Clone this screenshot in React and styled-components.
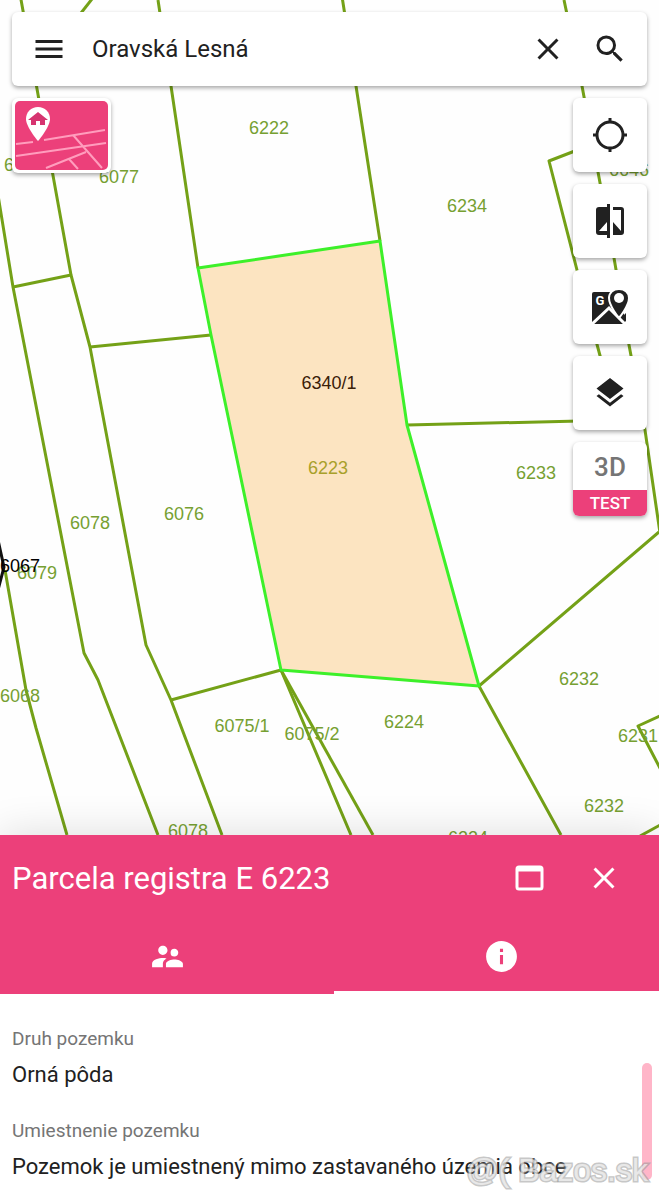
import React, { useState } from 'react'
import styled, { createGlobalStyle } from 'styled-components'
import {
  MdMenu,
  MdClose,
  MdSearch,
  MdLayers,
  MdSupervisorAccount,
  MdInfo,
} from 'react-icons/md'

const GlobalStyle = createGlobalStyle`
  * {
    box-sizing: border-box;
  }

  body {
    margin: 0;
    font-family: Roboto, 'Liberation Sans', sans-serif;
    color: #212121;
    background: #fefefe;
  }

  button {
    font: inherit;
    color: inherit;
    border: 0;
    padding: 0;
    background: none;
    cursor: pointer;
  }
`

const Page = styled.div`
  position: relative;
  display: flex;
  flex-direction: column;
  height: 100vh;
  overflow: hidden;
`

const MapArea = styled.main`
  position: relative;
  flex: 1;
  min-height: 0;
  padding: 12px;
  overflow: hidden;
`

const MapCanvas = styled.svg`
  position: absolute;
  inset: 0;
  width: 100%;
  height: 100%;
  font-family: 'Liberation Sans', Arial, sans-serif;
  font-size: 18px;
  text-anchor: middle;
`

const Boundary = styled.polyline`
  fill: none;
  stroke: ${p => p.$dark ? '#111' : '#74a117'};
  stroke-width: 3;
  stroke-linejoin: round;
`

const Selected = styled.polygon`
  fill: #fce4c1;
  stroke: #3df02a;
  stroke-width: 3;
  stroke-linejoin: round;
`

const ParcelLabel = styled.text`
  fill: ${p => p.$color || '#76a031'};
`

const Overlay = styled.div`
  position: relative;
  display: flex;
  flex-direction: column;
  gap: 12px;
`

const SearchBar = styled.form`
  display: flex;
  align-items: center;
  height: 74px;
  background: #fff;
  border-radius: 6px;
  box-shadow: 0 2px 4px rgba(0, 0, 0, 0.35);
`

const SearchInput = styled.input`
  flex: 1;
  min-width: 0;
  padding: 0 6px;
  border: 0;
  outline: 0;
  font: inherit;
  font-size: 24px;
  color: inherit;
  background: none;
`

const IconButton = styled.button`
  display: flex;
  align-items: center;
  justify-content: center;
  width: ${p => p.$wide ? '74px' : '50px'};
  height: 50px;

  svg {
    width: 36px;
    height: 36px;
  }
`

const Controls = styled.div`
  display: flex;
  justify-content: space-between;
  align-items: flex-start;
`

const LayerThumb = styled.button`
  width: 99px;
  height: 75px;
  padding: 3px;
  background: #fff;
  border-radius: 6px;
  box-shadow: 0 2px 4px rgba(0, 0, 0, 0.35);

  svg {
    display: block;
    width: 93px;
    height: 69px;
    border-radius: 5px;
  }
`

const Tools = styled.div`
  display: flex;
  flex-direction: column;
  gap: 12px;
`

const ToolButton = styled.button`
  display: flex;
  flex-direction: column;
  align-items: center;
  justify-content: center;
  width: 74px;
  height: 74px;
  overflow: hidden;
  background: #fff;
  border-radius: 6px;
  box-shadow: 0 2px 4px rgba(0, 0, 0, 0.35);

  svg {
    width: 36px;
    height: 36px;
  }
`

const ModeName = styled.span`
  padding-top: 2px;
  font-size: 26px;
  font-weight: 500;
  line-height: 46px;
  color: #757575;
`

const ModeTag = styled.span`
  width: 100%;
  font-size: 17px;
  font-weight: 500;
  line-height: 26px;
  color: #fff;
  background: #ec407a;
`

const Panel = styled.section`
  position: relative;
  flex: none;
  background: #fff;
  box-shadow: 0 0 40px rgba(0, 0, 0, 0.14);
`

const PanelHeader = styled.header`
  display: flex;
  align-items: center;
  height: 86px;
  padding: 0 18px 0 12px;
  color: #fff;
  background: #ec407a;
`

const PanelTitle = styled.h1`
  flex: 1;
  margin: 0;
  font-size: 31px;
  font-weight: 400;
`

/* the second tab runs slightly past the right edge */
const TabList = styled.div`
  display: flex;
  height: 73px;
  margin-right: -9px;
  color: #fff;
  background: #ec407a;
`

const Tab = styled.button`
  flex: 1;
  display: flex;
  align-items: center;
  justify-content: center;
  border-bottom: 3px solid ${p => p.$active ? '#fff' : 'transparent'};

  svg {
    width: 37px;
    height: 37px;
  }
`

const Details = styled.dl`
  height: 206px;
  margin: 0;
  padding: 32px 12px 0;
  overflow: hidden;
`

const Term = styled.dt`
  font-size: 19px;
  line-height: 26px;
  color: #757575;
`

const Value = styled.dd`
  margin: 10px 0 30px;
  font-size: 22px;
  line-height: 26px;
`

const ScrollThumb = styled.div`
  position: absolute;
  right: 7px;
  bottom: 20px;
  width: 10px;
  height: 117px;
  border-radius: 5px;
  background: #ffb5c8;
`

const Watermark = styled.div`
  position: absolute;
  right: 11px;
  bottom: 11px;
  font-family: 'Liberation Sans', Arial, sans-serif;
  font-size: 32px;
  line-height: 38px;
  color: rgba(255, 255, 255, 0.6);
  paint-order: stroke fill;
  -webkit-text-stroke: 3px rgba(150, 150, 150, 0.55);
`

const boundaries = [
  '20,-6 39,100 52,170 71,275 90,347 146,645 171,700 222,835',
  '92,-1 30,78',
  '158,0 171,86 198,268',
  '341,-10 356,86 380,241',
  '-2,195 13,287 84,653 98,680 158,835',
  '13,287 71,275',
  '90,347 211,335',
  '5,570 26,690 36,728 67,835',
  '171,700 281,670 351,835',
  '281,670 373,835',
  '659,532 479,686 561,835',
  '407,425 580,421',
  '564,0 582,86 598,172 614,258 629,345 645,430 660,533',
  '580,149 549,161 577,270 602,363',
  '662,715 638,726 662,772',
  '640,836 662,824',
]

const labels = [
  [269, 134, '6222'],
  [119, 183, '6077'],
  [467, 212, '6234'],
  [629, 176, '6646'],
  [24, 171, '6080'],
  [536, 479, '6233'],
  [184, 520, '6076'],
  [90, 529, '6078'],
  [37, 579, '6079'],
  [20, 702, '6068'],
  [242, 732, '6075/1'],
  [312, 740, '6075/2'],
  [404, 728, '6224'],
  [579, 685, '6232'],
  [638, 742, '6231'],
  [604, 812, '6232'],
  [188, 837, '6078'],
  [468, 844, '6224'],
]

function LocateIcon() {
  return (
    <svg viewBox="0 0 36 36" fill="none" stroke="currentColor" strokeWidth="3" aria-hidden="true">
      <circle cx="18" cy="18" r="13" />
      <path d="M18 1v5M18 30v5M1 18h5M30 18h5" />
    </svg>
  )
}

function CompareIcon() {
  return (
    <svg viewBox="0 0 36 36" fill="currentColor" aria-hidden="true">
      <path d="M15 1h3v34h-3v-3H7a3 3 0 0 1-3-3V7a3 3 0 0 1 3-3h8zM15 19L7 28h8z" fillRule="evenodd" />
      <path d="M21 4h8a3 3 0 0 1 3 3v22a3 3 0 0 1-3 3h-8V19l8 9V7h-8z" />
    </svg>
  )
}

function StreetIcon() {
  return (
    <svg viewBox="0 0 36 36" aria-hidden="true">
      <path d="M2 3h31v32H0V5q0-2 2-2z" fill="currentColor" />
      <path d="M22 0h14v20l-3 6h3v10z" fill="#fff" />
      <path d="M4 35L17 22l13 13z" fill="currentColor" />
      <path d="M34 24v9l-4-5z" fill="currentColor" />
      <path d="M-1 36L17 19l18 18" fill="none" stroke="#fff" strokeWidth="3" />
      <text x="8" y="16" fontSize="13" fontWeight="700" textAnchor="middle" fill="#fff">G</text>
      <path
        d="M27 0c-6 0-10 4-10 9 0 8 10 20 10 20s10-12 10-20c0-5-4-9-10-9z"
        fill="currentColor"
        stroke="#fff"
        strokeWidth="2"
      />
      <circle cx="27" cy="9" r="5" fill="#fff" />
    </svg>
  )
}

function WindowIcon() {
  return (
    <svg viewBox="0 0 36 36" fill="none" stroke="currentColor" aria-hidden="true">
      <rect x="5" y="7" width="25" height="22" rx="2" strokeWidth="3" />
      <path d="M5 9h25" strokeWidth="5" />
    </svg>
  )
}

function ThumbMap() {
  return (
    <svg viewBox="0 0 93 69" aria-hidden="true">
      <rect width="93" height="69" fill="#ec407a" />
      <g fill="none" stroke="#ff9dbd" strokeWidth="2">
        <path d="M1 43l17-2M29 39l61-10M1 55l90-13M58 34l29 33M31 67l40-16M54 58l9 10" />
      </g>
      <path d="M23 6c-7 0-12 5-12 12 0 8 12 22 12 22s12-14 12-22c0-7-5-12-12-12z" fill="#fff" />
      <path d="M23 11l10 8h-3v5h-5v-4h-4v4h-5v-5h-3z" fill="#d63470" />
    </svg>
  )
}

export default function App() {
  const [query, setQuery] = useState('Oravská Lesná')
  const [tab, setTab] = useState('info')

  return (
    <Page>
      <GlobalStyle />
      <MapArea>
        <MapCanvas viewBox="0 0 659 835" preserveAspectRatio="xMidYMin slice">
          {boundaries.map(points => <Boundary key={points} points={points} />)}
          <Boundary $dark points="-2,540 4,567 -2,590" />
          {labels.map(([x, y, name]) => (
            <ParcelLabel key={`${x}-${y}`} x={x} y={y}>{name}</ParcelLabel>
          ))}
          <ParcelLabel x="20" y="572" $color="#000">6067</ParcelLabel>
          <Selected points="198,268 380,241 407,425 479,686 281,670 211,335" />
          <ParcelLabel x="329" y="389" $color="#3a2008">6340/1</ParcelLabel>
          <ParcelLabel x="328" y="474" $color="#a8a02a">6223</ParcelLabel>
        </MapCanvas>
        <Overlay>
          <SearchBar onSubmit={e => e.preventDefault()}>
            <IconButton $wide type="button" aria-label="Menu"><MdMenu /></IconButton>
            <SearchInput
              aria-label="Hľadať"
              value={query}
              onChange={e => setQuery(e.target.value)}
            />
            <IconButton type="button" aria-label="Vymazať" onClick={() => setQuery('')}>
              <MdClose />
            </IconButton>
            <IconButton $wide aria-label="Hľadať"><MdSearch /></IconButton>
          </SearchBar>
          <Controls>
            <LayerThumb aria-label="Podkladová mapa"><ThumbMap /></LayerThumb>
            <Tools>
              <ToolButton aria-label="Moja poloha"><LocateIcon /></ToolButton>
              <ToolButton aria-label="Porovnať"><CompareIcon /></ToolButton>
              <ToolButton aria-label="Google mapy"><StreetIcon /></ToolButton>
              <ToolButton aria-label="Vrstvy"><MdLayers /></ToolButton>
              <ToolButton>
                <ModeName>3D</ModeName>
                <ModeTag>TEST</ModeTag>
              </ToolButton>
            </Tools>
          </Controls>
        </Overlay>
      </MapArea>
      <Panel>
        <PanelHeader>
          <PanelTitle>Parcela registra E 6223</PanelTitle>
          <IconButton $wide aria-label="Zväčšiť"><WindowIcon /></IconButton>
          <IconButton $wide aria-label="Zavrieť"><MdClose /></IconButton>
        </PanelHeader>
        <TabList role="tablist">
          <Tab
            role="tab"
            aria-label="Vlastníci"
            aria-selected={tab === 'owners'}
            $active={tab === 'owners'}
            onClick={() => setTab('owners')}
          >
            <MdSupervisorAccount />
          </Tab>
          <Tab
            role="tab"
            aria-label="Informácie"
            aria-selected={tab === 'info'}
            $active={tab === 'info'}
            onClick={() => setTab('info')}
          >
            <MdInfo />
          </Tab>
        </TabList>
        <Details>
          <Term>Druh pozemku</Term>
          <Value>Orná pôda</Value>
          <Term>Umiestnenie pozemku</Term>
          <Value>Pozemok je umiestnený mimo zastavaného územia obce</Value>
        </Details>
        <ScrollThumb />
      </Panel>
      <Watermark>@( Bazos.sk</Watermark>
    </Page>
  )
}
